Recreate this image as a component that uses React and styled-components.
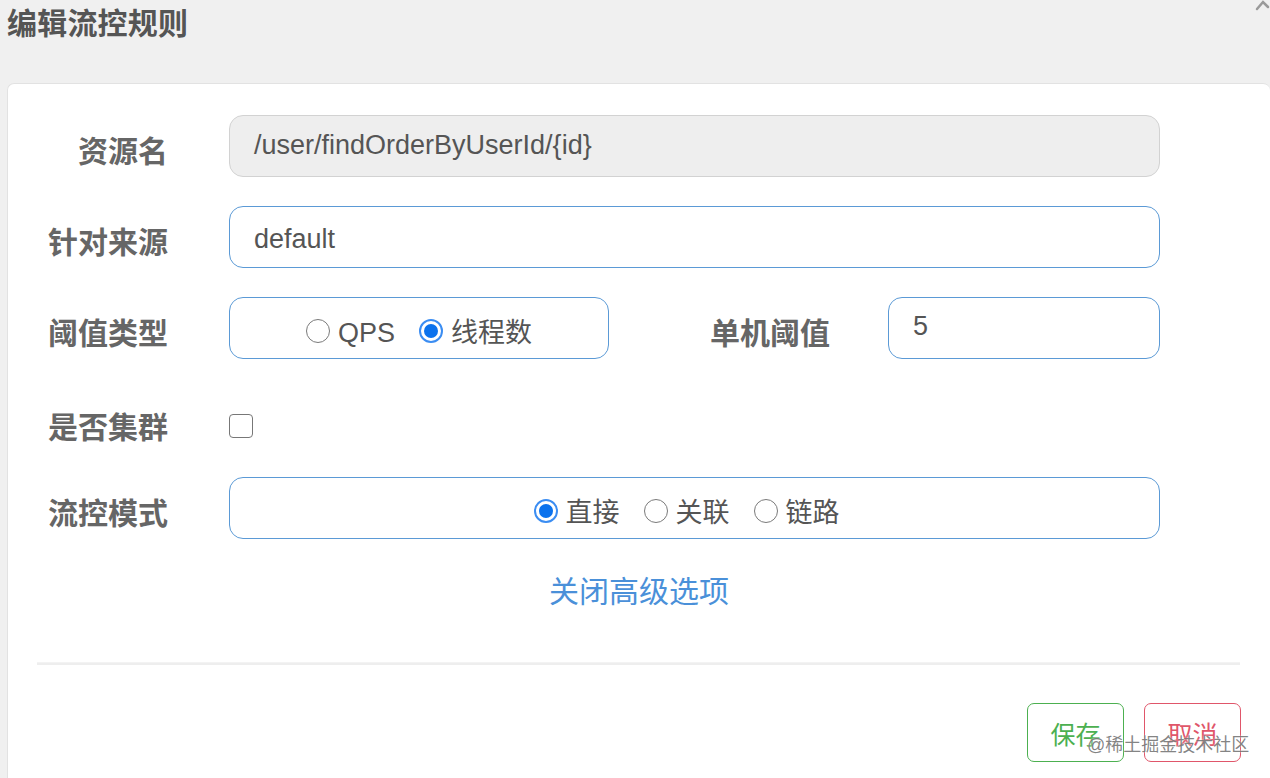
import React from "react";
import styled, { createGlobalStyle } from "styled-components";

const FONT = `"Liberation Sans", Arial, "Noto Sans CJK SC", sans-serif`;

const Global = createGlobalStyle`
  html, body { margin: 0; padding: 0; }
  body {
    background: #f0f0f0;
    font-family: ${FONT};
    overflow: hidden;
    width: 1270px;
    height: 778px;
  }
`;

const Page = styled.div`
  position: relative;
  width: 1270px;
  height: 778px;
  display: flex;
  flex-direction: column;
`;

const Header = styled.div`
  height: 83px;
  box-sizing: border-box;
  padding: 8px 0 0 7px;
`;

const Title = styled.h4`
  margin: 0;
  font-size: 30px;
  line-height: 32px;
  font-weight: 700;
  color: #555;
  letter-spacing: 0.2px;
`;

const CloseMark = styled.svg`
  position: absolute;
  top: 0;
  right: 0;
`;

const Card = styled.div`
  flex: 1;
  margin-left: 7px;
  background: #fff;
  border: 1px solid #e2e2e2;
  border-right: none;
  border-bottom: none;
  border-radius: 7px 7px 0 0;
  display: flex;
  flex-direction: column;
`;

const Form = styled.div`
  display: flex;
  flex-direction: column;
  gap: 29px;
  padding: 31px 110px 0 0;
`;

const Row = styled.div`
  display: flex;
  align-items: center;
  height: ${(p) => p.$h || 62}px;
  box-sizing: border-box;
  padding-top: ${(p) => p.$pt || 0}px;
`;

const Label = styled.label`
  flex: none;
  width: ${(p) => p.$w || 160}px;
  margin-right: ${(p) => p.$mr || 61}px;
  text-align: right;
  font-size: 30px;
  font-weight: 700;
  color: #666;
  font-family: ${FONT};
  line-height: 1;
  position: relative;
  top: ${(p) => (p.$dy === undefined ? 6 : p.$dy)}px;
`;

const Input = styled.div`
  flex: ${(p) => (p.$w ? "none" : "1")};
  width: ${(p) => (p.$w ? `${p.$w}px` : "auto")};
  height: 62px;
  box-sizing: border-box;
  border-radius: 14px;
  border: 1px solid ${(p) => (p.$disabled ? "#d2d2d2" : "#5b9ad6")};
  background: ${(p) => (p.$disabled ? "#eeeeee" : "#fff")};
  padding-left: 24px;
  display: flex;
  align-items: center;
  font-size: 27px;
  color: #555;
  padding-top: ${(p) => p.$pt || 0}px;
  padding-bottom: ${(p) => p.$pb || 0}px;
`;

const RadioBox = styled.div`
  flex: ${(p) => (p.$w ? "none" : "1")};
  width: ${(p) => (p.$w ? `${p.$w}px` : "auto")};
  height: 62px;
  box-sizing: border-box;
  border-radius: 14px;
  border: 1px solid #5b9ad6;
  display: flex;
  align-items: center;
  justify-content: center;
  gap: 24px;
  padding-top: 10px;
  padding-right: ${(p) => p.$pr || 0}px;
`;

const RadioItem = styled.span`
  display: inline-flex;
  align-items: center;
  gap: 8px;
  font-size: 27px;
  color: #555;
  line-height: 1;
`;

const RadioCircle = styled.span`
  width: 24px;
  height: 24px;
  box-sizing: border-box;
  border-radius: 50%;
  border: ${(p) => (p.$on ? "2px solid #3b8df2" : "1.5px solid #7a7a7a")};
  display: inline-flex;
  align-items: center;
  justify-content: center;
  position: relative;
  top: -2px;
  &::after {
    content: "";
    display: ${(p) => (p.$on ? "block" : "none")};
    width: 14px;
    height: 14px;
    border-radius: 50%;
    background: #0b72ed;
  }
`;

const Checkbox = styled.span`
  width: 24px;
  height: 24px;
  box-sizing: border-box;
  border: 1.5px solid #777;
  border-radius: 4px;
  background: #fff;
`;

const LinkRow = styled.div`
  display: flex;
  justify-content: center;
  margin-top: 33px;
`;

const Link = styled.a`
  font-size: 30px;
  line-height: 40px;
  color: #4a90d9;
  cursor: pointer;
  text-decoration: none;
`;

const Divider = styled.div`
  margin: 50px 30px 0 29px;
  height: 2px;
  background: #eeeeee;
  border-top: 1px solid #f3f3f3;
`;

const Footer = styled.div`
  display: flex;
  justify-content: flex-end;
  gap: 20px;
  padding: 38px 29px 0 0;
`;

const Button = styled.button`
  width: 97px;
  height: 59px;
  box-sizing: border-box;
  background: #fff;
  border-radius: 7px;
  border: 1.5px solid ${(p) => p.$color};
  color: ${(p) => p.$color};
  font-size: 25px;
  font-family: ${FONT};
  padding: 0;
  cursor: pointer;
`;

const Watermark = styled.div`
  position: absolute;
  left: 1087px;
  top: 733px;
  font-size: 18px;
  line-height: 24px;
  color: rgba(110, 110, 110, 0.85);
  text-shadow: 0 0 2px rgba(255, 255, 255, 0.9);
  white-space: nowrap;
`;

function Radio({ on, children }) {
  return (
    <RadioItem>
      <RadioCircle $on={on} />
      {children}
    </RadioItem>
  );
}

export default function App() {
  return (
    <Page>
      <Global />
      <Header>
        <Title>编辑流控规则</Title>
      </Header>
      <CloseMark width="16" height="12" viewBox="0 0 16 12">
        <path d="M3 9 L9 2 L14 7" stroke="#9a9a9a" strokeWidth="2.5" fill="none" strokeLinecap="round" />
      </CloseMark>
      <Card>
        <Form>
          <Row>
            <Label>资源名</Label>
            <Input $disabled $pb={1}>/user/findOrderByUserId/{"{id}"}</Input>
          </Row>
          <Row>
            <Label>针对来源</Label>
            <Input $pt={4}>default</Input>
          </Row>
          <Row>
            <Label>阈值类型</Label>
            <RadioBox $w={380}>
              <Radio>QPS</Radio>
              <Radio on>线程数</Radio>
            </RadioBox>
            <Label $w={221} $mr={58}>单机阈值</Label>
            <Input $pb={4}>5</Input>
          </Row>
          <Row $h={60} $pt={16}>
            <Label $dy={2}>是否集群</Label>
            <Checkbox />
          </Row>
          <Row>
            <Label>流控模式</Label>
            <RadioBox $pr={16}>
              <Radio on>直接</Radio>
              <Radio>关联</Radio>
              <Radio>链路</Radio>
            </RadioBox>
          </Row>
        </Form>
        <LinkRow>
          <Link>关闭高级选项</Link>
        </LinkRow>
        <Divider />
        <Footer>
          <Button $color="#4cb050">保存</Button>
          <Button $color="#e0566a">取消</Button>
        </Footer>
      </Card>
      <Watermark>@稀土掘金技术社区</Watermark>
    </Page>
  );
}
